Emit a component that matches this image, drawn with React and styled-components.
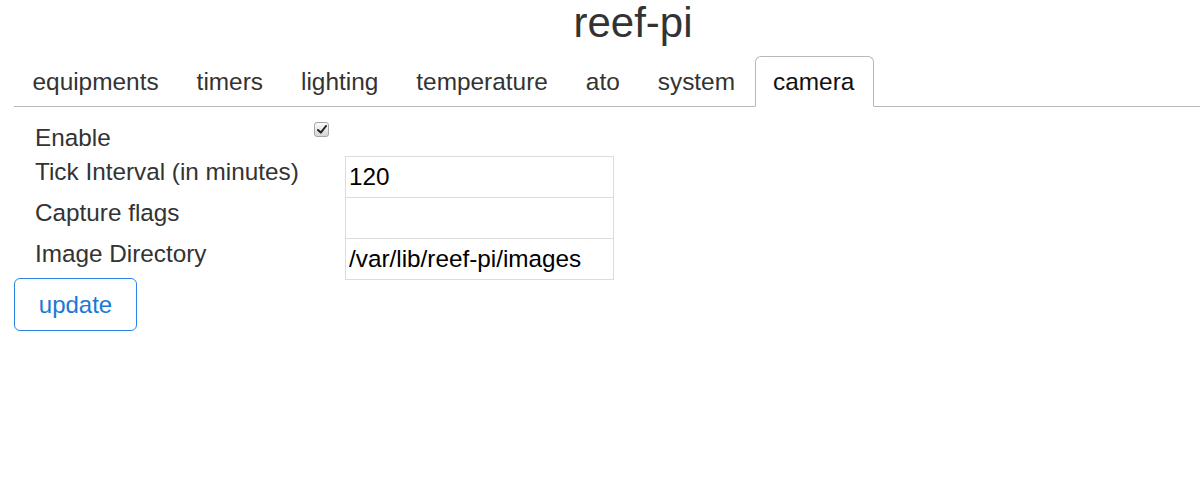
import React from "react";
import styled, { createGlobalStyle } from "styled-components";

const GlobalStyle = createGlobalStyle`
  html, body {
    margin: 0;
    padding: 0;
    background: #fff;
    font-family: "Liberation Sans", Arial, sans-serif;
    color: #333;
  }
`;

const tabs = [
  "equipments",
  "timers",
  "lighting",
  "temperature",
  "ato",
  "system",
  "camera",
];

const Page = styled.div`
  padding-left: 14px;
`;

const Title = styled.h1`
  margin: 0;
  font-size: 42px;
  font-weight: 400;
  line-height: 46px;
  color: #333;
  text-align: center;
  padding-left: 52px;
`;

const TabBar = styled.ul`
  display: flex;
  list-style: none;
  margin: 10px 0 0;
  padding: 0;
  border-bottom: 1px solid #b8b8b8;
`;

const Tab = styled.li`
  margin-bottom: -1px;
  padding: 7px 18.5px 6px 17.5px;
  font-size: 24.4px;
  line-height: 36px;
  border: 1px solid ${(p) => (p.active ? "#b8b8b8" : "transparent")};
  border-bottom-color: ${(p) => (p.active ? "#fff" : "transparent")};
  border-radius: 6px 6px 0 0;
  background: ${(p) => (p.active ? "#fff" : "transparent")};
  color: ${(p) => (p.active ? "#111" : "#333")};
  cursor: pointer;
`;

const Form = styled.div`
  display: grid;
  grid-template-columns: 279px 31px 269px;
  grid-template-rows: 34px;
  grid-auto-rows: 41px;
  margin-top: 15px;
  padding-left: 21px;
`;

const Label = styled.div`
  grid-column: ${(p) => (p.span ? "1 / 3" : "1")};
  font-size: 24.3px;
  line-height: 31px;
  color: #333;
`;

const Check = styled.span`
  grid-column: 2;
  align-self: start;
  width: 13px;
  height: 13px;
  border: 1px solid #a6a6a6;
  border-radius: 3px;
  background: linear-gradient(#fafafa, #d6d6d6);
  display: flex;
  align-items: center;
  justify-content: center;
`;

const Field = styled.input`
  grid-column: 3;
  box-sizing: border-box;
  width: 269px;
  height: 42px;
  margin: 0;
  padding: 0 3px;
  border: 1px solid #dcdcdc;
  border-radius: 0;
  font-family: "Liberation Sans", Arial, sans-serif;
  font-size: 24.3px;
  color: #000;
  background: #fff;
  outline: none;
`;

const Button = styled.button`
  margin-top: -1px;
  box-sizing: border-box;
  width: 123px;
  height: 53px;
  padding: 0;
  border: 1.5px solid #2a84e0;
  border-radius: 6px;
  background: #fff;
  font-family: "Liberation Sans", Arial, sans-serif;
  font-size: 24px;
  color: #1a78d6;
  cursor: pointer;
`;

const fields = [
  { label: "Tick Interval (in minutes)", value: "120" },
  { label: "Capture flags", value: "" },
  { label: "Image Directory", value: "/var/lib/reef-pi/images" },
];

export default function App() {
  return (
    <Page>
      <GlobalStyle />
      <Title>reef-pi</Title>
      <TabBar>
        {tabs.map((t) => (
          <Tab key={t} active={t === "camera"}>
            {t}
          </Tab>
        ))}
      </TabBar>
      <Form>
        <Label>Enable</Label>
        <Check>
          <svg width="10" height="9" viewBox="0 0 10 9">
            <path
              d="M1 5 L3.8 7.6 L9 1"
              fill="none"
              stroke="#222"
              strokeWidth="2"
              strokeLinecap="round"
              strokeLinejoin="round"
            />
          </svg>
        </Check>
        {fields.map((f) => (
          <React.Fragment key={f.label}>
            <Label span>{f.label}</Label>
            <Field defaultValue={f.value} />
          </React.Fragment>
        ))}
      </Form>
      <Button>update</Button>
    </Page>
  );
}
